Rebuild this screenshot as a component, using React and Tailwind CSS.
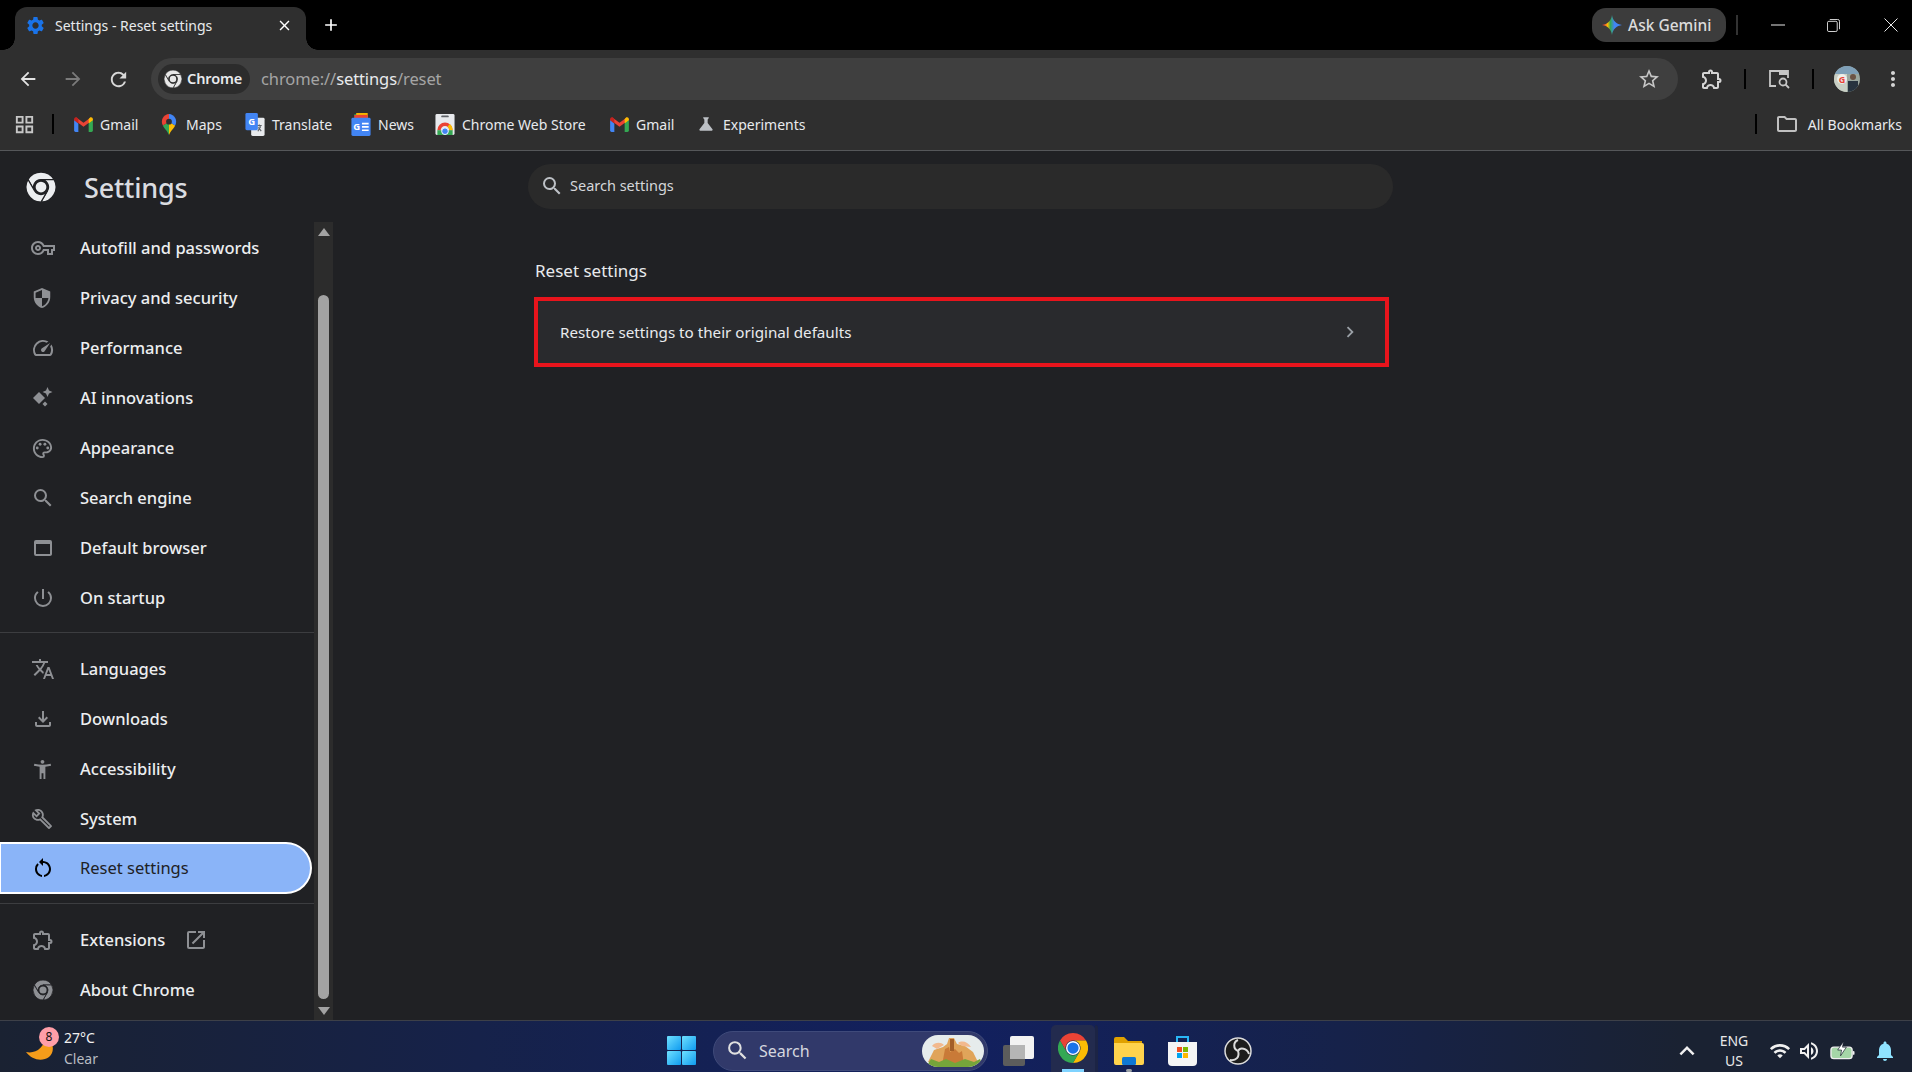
import {
  MdOutlineVpnKey, MdSecurity, MdOutlineSpeed, MdOutlinePalette, MdSearch, MdOutlineWebAsset,
  MdOutlinePowerSettingsNew, MdTranslate, MdOutlineFileDownload, MdAccessibilityNew, MdOutlineBuild,
  MdRestartAlt, MdOutlineExtension, MdOutlineOpenInNew, MdArrowBack, MdArrowForward, MdRefresh, MdClose,
  MdAdd, MdSettings, MdOutlineStarBorder, MdMoreVert, MdOutlineFolder, MdGridView, MdChevronRight,
  MdKeyboardArrowUp, MdWifi, MdOutlineVolumeUp, MdNotifications, MdScience,
} from 'react-icons/md';

function ChromeColor({ className }) {
  return (
    <svg viewBox="0 0 24 24" className={className}>
      <path fill="#ea4335" d="M12 0A12 12 0 0 0 1.6 6L6.8 15A6 6 0 0 1 12 6H22.4A12 12 0 0 0 12 0Z" />
      <path fill="#fbbc04" d="M22.4 6H12A6 6 0 0 1 17.2 15L12 24A12 12 0 0 0 22.4 6Z" />
      <path fill="#34a853" d="M1.6 6A12 12 0 0 0 12 24L17.2 15A6 6 0 0 1 6.8 15Z" />
      <circle cx="12" cy="12" r="5.6" fill="#fff" />
      <circle cx="12" cy="12" r="4.5" fill="#1a73e8" />
    </svg>
  );
}

// single colour chrome mark, gaps are drawn in the colour of whatever sits behind it
function ChromeMono({ className, gap }) {
  return (
    <svg viewBox="0 0 24 24" className={className} fill="currentColor" stroke={gap} strokeWidth="1">
      <path d="M12 0A12 12 0 0 0 1.6 6L6.8 15A6 6 0 0 1 12 6H22.4A12 12 0 0 0 12 0Z" />
      <path d="M22.4 6H12A6 6 0 0 1 17.2 15L12 24A12 12 0 0 0 22.4 6Z" />
      <path d="M1.6 6A12 12 0 0 0 12 24L17.2 15A6 6 0 0 1 6.8 15Z" />
      <circle cx="12" cy="12" r="4.300" stroke="none" />
    </svg>
  );
}

function GmailIcon() {
  return (
    <svg viewBox="0 0 20 16" className="w-[19px] h-[15px]">
      <path fill="#4285f4" d="M0 3v11.5A1.5 1.5 0 0 0 1.5 16H4.5V7z" />
      <path fill="#34a853" d="M20 3v11.5a1.5 1.5 0 0 1-1.5 1.5h-3V7z" />
      <path fill="#ea4335" d="M0 3 10 10.5 20 3 18 .5 15.5 2 10 6 4.5 2 2 .5z" />
      <path fill="#fbbc04" d="M15.5 2v5L20 3.5V2.2C20 .6 18.2-.4 17 .6z" />
      <path fill="#c5221f" d="M4.5 2v5L0 3.5V2.2C0 .6 1.8-.4 3 .6z" />
    </svg>
  );
}

function MapsIcon() {
  return (
    <span className="w-[20px] flex justify-center">
      <svg viewBox="0 0 16 22" className="w-[16px] h-[21px]">
        <path fill="#34a853" d="M8 22C6 17 3 15.5 1.6 12L8 8z" />
        <path fill="#fbbc04" d="M8 22c2-5 5-6.500 6.400-10L8 8z" />
        <path fill="#ea4335" d="M1.600 12A8 8 0 0 1 8 0V8z" />
        <path fill="#4285f4" d="M14.400 12A8 8 0 0 0 8 0V8z" />
        <circle cx="8" cy="8" r="3" fill="#2f2f2f" />
      </svg>
    </span>
  );
}

function TranslateIcon() {
  return (
    <svg viewBox="0 0 20 24" className="w-[20px] h-[23px]">
      <rect x="6" y="5" width="14" height="19" rx="1.500" fill="#e8eaed" />
      <path d="M12 13h5M14.500 12v2M13 19l3-5M13.500 15l3 4" stroke="#5f6368" strokeWidth="1.200" fill="none" />
      <rect x="0" y="0" width="13" height="18" rx="1.500" fill="#4285f4" />
      <text x="6.500" y="12" fontSize="10" fontWeight="700" textAnchor="middle" fill="#fff">G</text>
    </svg>
  );
}

function NewsIcon() {
  return (
    <svg viewBox="0 0 20 24" className="w-[20px] h-[23px]">
      <path fill="#0f9d58" d="M3 1h11l2 5H3z" />
      <path fill="#f4b400" d="M5 0h12v6H5z" />
      <path fill="#ea4335" d="M3 2h14v5H3z" />
      <rect x="0" y="5" width="20" height="19" rx="1.500" fill="#4285f4" />
      <text x="5.500" y="18" fontSize="10" fontWeight="700" textAnchor="middle" fill="#fff">G</text>
      <path d="M11 11h7M11 14.500h7M11 18h7" stroke="#fff" strokeWidth="1.800" />
    </svg>
  );
}

function StoreIcon() {
  return (
    <svg viewBox="0 0 20 22" className="w-[20px] h-[21px]">
      <rect x="0" y="0" width="20" height="22" rx="1.500" fill="#e8eaed" />
      <rect x="6" y="1.500" width="8" height="2" rx="1" fill="#5f6368" />
      <path fill="#ea4335" d="M2 17a8 8 0 0 1 16 0h-3.500a4.500 4.500 0 0 0-9 0z" />
      <path fill="#fbbc04" d="M14.500 17a4.500 4.500 0 0 0-2-3.700L15 10.500a8 8 0 0 1 3 6.500z" />
      <rect x="2" y="17" width="16" height="5" fill="#34a853" />
      <circle cx="10" cy="18" r="3.500" fill="#4285f4" stroke="#fff" />
    </svg>
  );
}

function GeminiStar() {
  return (
    <svg viewBox="0 0 20 20" className="w-[20px] h-[20px]">
      <defs>
        <linearGradient id="gem" x1="0" y1="0.5" x2="1" y2="0.5">
          <stop offset="0.1" stopColor="#ea4335" />
          <stop offset="0.28" stopColor="#fbbc04" />
          <stop offset="0.42" stopColor="#34a853" />
          <stop offset="0.62" stopColor="#4285f4" />
          <stop offset="1" stopColor="#4285f4" />
        </linearGradient>
      </defs>
      <path fill="url(#gem)" d="M10 0C10.600 5.500 14.500 9.400 20 10 14.500 10.600 10.600 14.500 10 20 9.400 14.500 5.500 10.600 0 10 5.500 9.400 9.400 5.500 10 0Z" />
    </svg>
  );
}

function SideIcon() {
  return (
    <svg viewBox="0 0 22 20" className="w-[22px] h-[20px]" fill="none" stroke="#c7c7c7" strokeWidth="1.800">
      <path d="M8 17H2V2h18v7" />
      <path fill="#c7c7c7" stroke="none" d="M11 2h9v4h-9z" />
      <circle cx="15" cy="13" r="3.500" />
      <path d="m17.500 15.500 3.500 3.500" />
    </svg>
  );
}

function Avatar() {
  return (
    <svg viewBox="0 0 26 26" className="w-[26px] h-[26px]">
      <defs>
        <clipPath id="ava"><circle cx="13" cy="13" r="13" /></clipPath>
      </defs>
      <g clipPath="url(#ava)">
        <rect width="26" height="26" fill="#9aa79f" />
        <path fill="#7fa0b8" d="M0 0h26v8H0z" />
        <path fill="#c9cfc4" d="M0 8h13v18H0z" />
        <circle cx="19" cy="11" r="3" fill="#6b5446" />
        <path fill="#27333f" d="M14 15h10v11H14z" />
        <circle cx="8" cy="13" r="5" fill="#eceeea" />
      </g>
      <text x="8" y="16.500" fontSize="9" fontWeight="700" textAnchor="middle" fill="#ea4335">G</text>
    </svg>
  );
}

function AiIcon() {
  return (
    <svg viewBox="0 0 22 22" className="w-[22px] h-[22px]" fill="#8e9094">
      <path d="M8 5 14 11 8 17 2 11z" />
      <path d="M16.500 0 18 3.500 21.500 5 18 6.500 16.500 10 15 6.500 11.500 5 15 3.500z" />
      <path d="M14 14.500 16.500 17 14 19.500 11.500 17z" />
    </svg>
  );
}

function WindowsLogo() {
  return (
    <svg viewBox="0 0 29 29" className="w-[29px] h-[29px]">
      <defs>
        <linearGradient id="win" x1="0" y1="0" x2="1" y2="1">
          <stop offset="0" stopColor="#6fe0ff" />
          <stop offset="1" stopColor="#0f9bf0" />
        </linearGradient>
      </defs>
      <rect x="0" y="0" width="14" height="14" rx="1" fill="url(#win)" />
      <rect x="15" y="0" width="14" height="14" rx="1" fill="url(#win)" />
      <rect x="0" y="15" width="14" height="14" rx="1" fill="url(#win)" />
      <rect x="15" y="15" width="14" height="14" rx="1" fill="url(#win)" />
    </svg>
  );
}

function SearchThumb() {
  return (
    <svg viewBox="0 0 62 32" className="w-[62px] h-[32px]">
      <defs>
        <clipPath id="thumb"><rect width="62" height="32" rx="16" /></clipPath>
      </defs>
      <g clipPath="url(#thumb)">
        <rect width="62" height="32" fill="#e6ecec" />
        <path fill="#e0a45a" d="M6 27 12 15l9-3 4-3 2-6 5 0 3 6 8 2 8 6 5 10z" />
        <path fill="#c97a38" d="M20 30l3-16 4-2 1 5 5-3 4 4 3-2 2 14z" />
        <path fill="#f2b98e" d="M10 11c3-4 9-4 12-1l-7 4zM36 8c4-3 10-1 13 4l-9-1z" />
        <path fill="#a35f28" d="M28 4h4v12h-4z" />
        <path fill="#76a53a" d="M4 32l5-8 8 3 7-3 9 4 10-4 9 3 6-3 4 8z" />
      </g>
    </svg>
  );
}

function TaskViewIcon() {
  return (
    <svg viewBox="0 0 31 30" className="w-[31px] h-[30px]">
      <rect x="0" y="9" width="22" height="21" rx="2" fill="#5c5c5c" />
      <rect x="7" y="0" width="24" height="23" rx="2" fill="#f2f2f2" />
      <rect x="7" y="9" width="15" height="14" fill="#b5b5b5" />
    </svg>
  );
}

function ExplorerIcon() {
  return (
    <svg viewBox="0 0 30 28" className="w-[30px] h-[28px]">
      <path fill="#e0a100" d="M0 2a2 2 0 0 1 2-2h8l4 4h14v6H0z" />
      <path fill="#ffd34d" d="M0 6h28a2 2 0 0 1 2 2v18a2 2 0 0 1-2 2H2a2 2 0 0 1-2-2z" />
      <rect x="8" y="20" width="14" height="8" rx="1.500" fill="#0f78d4" />
    </svg>
  );
}

function StoreTaskIcon() {
  return (
    <svg viewBox="0 0 29 30" className="w-[29px] h-[30px]">
      <path d="M9 6V1h11v5" fill="none" stroke="#29b6f6" strokeWidth="2" />
      <path fill="#f5f5f5" d="M0 6h29v20a4 4 0 0 1-4 4H4a4 4 0 0 1-4-4z" />
      <rect x="9" y="11" width="5" height="5" fill="#f25022" />
      <rect x="15" y="11" width="5" height="5" fill="#7fba00" />
      <rect x="9" y="17" width="5" height="5" fill="#00a4ef" />
      <rect x="15" y="17" width="5" height="5" fill="#ffb900" />
    </svg>
  );
}

function ObsIcon() {
  return (
    <svg viewBox="0 0 28 28" className="w-[28px] h-[28px]" fill="none">
      <circle cx="14" cy="14" r="13" fill="#1c1c1c" stroke="#dcdcdc" strokeWidth="1.500" />
      <path d="M14 3c-5 2-5 9 0 11M25 17c-2-6-9-7-11-3M6 23c6 1 10-3 8-9" stroke="#dcdcdc" strokeWidth="2" />
    </svg>
  );
}

function BatteryIcon() {
  return (
    <svg viewBox="0 0 26 20" className="w-[25px] h-[20px]">
      <rect x="1" y="6" width="22" height="12" rx="3" fill="#a5d6a7" stroke="#f0f0f0" strokeWidth="1.400" />
      <rect x="23.500" y="10" width="2" height="4" rx="1" fill="#f0f0f0" />
      <path fill="#fff" stroke="#111827" strokeWidth="0.700" d="M14 0 8 9h4l-1 6 6-9h-4z" />
    </svg>
  );
}

const navTop = [
  ['Autofill and passwords', <MdOutlineVpnKey className="w-[24px] h-[24px]" />],
  ['Privacy and security', <MdSecurity className="w-[22px] h-[22px]" />],
  ['Performance', <MdOutlineSpeed className="w-[24px] h-[24px]" />],
  ['AI innovations', <AiIcon />],
  ['Appearance', <MdOutlinePalette className="w-[23px] h-[23px]" />],
  ['Search engine', <MdSearch className="w-[24px] h-[24px]" />],
  ['Default browser', <MdOutlineWebAsset className="w-[24px] h-[24px]" />],
  ['On startup', <MdOutlinePowerSettingsNew className="w-[24px] h-[24px]" />],
];

const navMid = [
  ['Languages', <MdTranslate className="w-[24px] h-[24px]" />],
  ['Downloads', <MdOutlineFileDownload className="w-[24px] h-[24px]" />],
  ['Accessibility', <MdAccessibilityNew className="w-[23px] h-[23px]" />],
  ['System', <MdOutlineBuild className="w-[22px] h-[22px]" />],
];

const bookmarks = [
  ['Gmail', <GmailIcon />, 'w-[85px]'],
  ['Maps', <MapsIcon />, 'w-[86px]'],
  ['Translate', <TranslateIcon />, 'w-[106px]'],
  ['News', <NewsIcon />, 'w-[84px]'],
  ['Chrome Web Store', <StoreIcon />, 'w-[175px]'],
  ['Gmail', <GmailIcon />, 'w-[86px]'],
  ['Experiments', <MdScience className="w-[20px] h-[20px] text-[#bdc1c6]" />, 'w-[110px]'],
];

function NavRow({ label, icon, extra }) {
  return (
    <div className="h-[50px] flex items-center">
      <span className="w-[80px] pl-[31px] flex items-center text-[#8e9094]">{icon}</span>
      <span className="text-[16.5px] font-medium text-[#eceef0]">{label}</span>
      {extra}
    </div>
  );
}

export default function App() {
  return (
    <div className="w-[1912px] h-[1072px] overflow-hidden flex flex-col bg-[#202124] font-['Noto_Sans','Open_Sans',sans-serif] text-[#e8eaed]">
      {/* title bar */}
      <div className="h-[50px] bg-black flex items-end shrink-0">
        <span className="w-[3px]" />
        <span className="w-[12px] h-[12px] bg-[radial-gradient(circle_at_0_0,#000_11.500px,#2f2f2f_12px)]" />
        <div className="w-[291px] h-[43px] bg-[#2f2f2f] rounded-t-[12px] flex items-center pb-[7px] relative">
          <MdSettings className="w-[21px] h-[21px] text-[#1a73e8] ml-[10px]" />
          <span className="ml-[9px] w-[220px] text-[14px] text-[#e8eaed]">Settings - Reset settings</span>
          <MdClose className="w-[17px] h-[17px] text-white ml-[1px]" />
        </div>
        <span className="w-[12px] h-[12px] bg-[radial-gradient(circle_at_100%_0,#000_11.500px,#2f2f2f_12px)]" />
        <div className="h-[50px] flex items-center ml-[3px]">
          <MdAdd className="w-[20px] h-[20px] text-white" />
        </div>
        <div className="flex-1" />
        <div className="h-[50px] flex items-center">
          <div className="w-[134px] h-[34px] rounded-[14px] bg-[#3c3c3c] flex items-center pl-[10px]">
            <GeminiStar />
            <span className="ml-[6px] text-[15.5px] font-medium text-[#dcdcdc] mt-[1px]">Ask Gemini</span>
          </div>
          <span className="w-[2px] h-[20px] bg-[#333] ml-[10px]" />
          <svg viewBox="0 0 14 14" className="w-[14px] h-[14px] ml-[33px]" stroke="#e8e8e8" fill="none"><path d="M0 7h14" /></svg>
          <svg viewBox="0 0 14 14" className="w-[13px] h-[13px] ml-[42px]" stroke="#e8e8e8" fill="none"><rect x="0.500" y="2.500" width="10.500" height="11" rx="1.500" /><path d="M3 .5h8.500a2 2 0 0 1 2 2V11" /></svg>
          <svg viewBox="0 0 14 14" className="w-[14px] h-[14px] ml-[44px]" stroke="#e8e8e8" fill="none"><path d="m.5.500 13 13M13.500.500l-13 13" /></svg>
        </div>
        <span className="w-[14px]" />
      </div>

      {/* toolbar */}
      <div className="h-[50px] bg-[#2f2f2f] flex items-start shrink-0 pt-[8px]">
        <div className="w-[151px] h-[42px] flex items-center text-[#e3e3e3]">
          <MdArrowBack className="w-[22px] h-[22px] ml-[17px]" />
          <MdArrowForward className="w-[22px] h-[22px] ml-[23px] text-[#7b7b7b]" />
          <MdRefresh className="w-[23px] h-[23px] ml-[23px] text-[#d8d8d8]" />
        </div>
        <div className="w-[1527px] h-[42px] rounded-full bg-[#3f3f3f] flex items-center pl-[7px] pr-[17px]">
          <div className="w-[92px] h-[30px] rounded-full bg-[#2c2c2c] flex items-center pl-[6px] mr-[11px]">
            <ChromeMono className="w-[18px] h-[18px] text-[#e8e8e8]" gap="#2c2c2c" />
            <span className="ml-[5px] text-[14.5px] font-semibold text-[#e8eaed] tracking-[-0.1px]">Chrome</span>
          </div>
          <span className="text-[16.5px] text-[#a5a5a5] tracking-[-0.1px] flex-1">chrome://<span className="text-[#e8eaed]">settings</span>/reset</span>
          <MdOutlineStarBorder className="w-[24px] h-[24px] text-[#c7c7c7]" />
        </div>
        <div className="flex-1 h-[42px] flex items-center text-[#c7c7c7]">
          <MdOutlineExtension className="w-[24px] h-[24px] ml-[22px] text-[#d4d4d4]" />
          <span className="w-[2px] h-[20px] bg-black ml-[20px]" />
          <span className="ml-[22px]"><SideIcon /></span>
          <span className="w-[2px] h-[20px] bg-black ml-[22px]" />
          <div className="ml-[20px]"><Avatar /></div>
          <MdMoreVert className="w-[24px] h-[24px] ml-[21px] text-[#d4d4d4]" />
        </div>
      </div>

      {/* bookmarks */}
      <div className="h-[50px] bg-[#2f2f2f] flex items-center shrink-0 text-[14px] text-[#e8eaed] pb-[2px]">
        <MdGridView className="w-[23px] h-[23px] ml-[13px] text-[#c7c7c7]" />
        <span className="w-[2px] h-[20px] bg-black ml-[16px] mr-[20px]" />
        {bookmarks.map(([label, icon, width], i) => (
          <div key={i} className={`${width} flex items-center gap-[7px] shrink-0`}>
            {icon}
            <span>{label}</span>
          </div>
        ))}
        <div className="flex-1" />
        <span className="w-[2px] h-[20px] bg-black mr-[18px]" />
        <MdOutlineFolder className="w-[24px] h-[24px] text-[#c0c0c0]" />
        <span className="ml-[9px] mr-[10px]">All Bookmarks</span>
      </div>

      {/* settings page */}
      <div className="flex-1 min-h-0 flex border-t-[1px] border-[#55575a]">
        <div className="w-[333px] shrink-0 flex flex-col">
          <div className="h-[71px] flex items-center shrink-0">
            <ChromeMono className="w-[30px] h-[30px] text-[#eceef0] ml-[26px]" gap="#202124" />
            <span className="ml-[28px] mt-[2px] text-[27px] leading-none text-[#dadce0] tracking-[-0.2px] font-medium">Settings</span>
          </div>
          <div className="flex-1 min-h-0 flex">
            <div className="w-[314px] pt-[1px]">
              {navTop.map(([label, icon]) => <NavRow key={label} label={label} icon={icon} />)}
              <div className="h-[1px] bg-[#3c3d40] mt-[9px] mb-[11px]" />
              {navMid.map(([label, icon]) => <NavRow key={label} label={label} icon={icon} />)}
              <div className="w-[312px] h-[52px] -mt-[2px] flex items-center bg-[#8ab4f8] border-2 border-l-[1px] border-white rounded-r-full rounded-l-[4px]">
                <span className="w-[79px] pl-[30px] flex items-center"><MdRestartAlt className="w-[24px] h-[24px] text-black" /></span>
                <span className="text-[16.5px] text-[#202124]">Reset settings</span>
              </div>
              <div className="h-[1px] bg-[#3c3d40] mt-[9px] mb-[11px]" />
              <NavRow
                label="Extensions"
                icon={<MdOutlineExtension className="w-[24px] h-[24px]" />}
                extra={<MdOutlineOpenInNew className="w-[24px] h-[24px] ml-[19px] text-[#8e9094]" />}
              />
              <NavRow label="About Chrome" icon={<ChromeMono className="w-[20px] h-[20px] mx-[2px]" gap="#202124" />} />
            </div>
            <div className="w-[19px] bg-[#2c2c2c] flex flex-col items-center pt-[6px] pb-[5px]">
              <span className="w-0 h-0 border-x-[6px] border-x-transparent border-b-[8px] border-b-[#a3a3a3]" />
              <div className="h-[59px]" />
              <div className="w-[11px] flex-1 rounded-full bg-[#a3a3a3]" />
              <div className="h-[8px]" />
              <span className="w-0 h-0 border-x-[6px] border-x-transparent border-t-[8px] border-t-[#a3a3a3]" />
            </div>
          </div>
        </div>

        <div className="flex-1 pl-[195px] pt-[13px]">
          <div className="w-[865px] h-[45px] rounded-full bg-[#2a2a2a] flex items-center pl-[12px] pb-[1px]">
            <MdSearch className="w-[24px] h-[24px] text-[#bdc1c6]" />
            <span className="ml-[6px] text-[14.5px] text-[#d5d7da]">Search settings</span>
          </div>
          <div className="ml-[7px] mt-[50px] text-[17px] leading-[24px] text-[#e8eaed]">Reset settings</div>
          <div className="ml-[6px] mt-[14px] w-[855px] h-[70px] border-[4px] border-[#e8141c] bg-[#292a2d] flex items-center pl-[22px] pr-[24px]">
            <span className="flex-1 text-[15.2px] text-[#e8eaed] mt-[1px]">Restore settings to their original defaults</span>
            <MdChevronRight className="w-[22px] h-[22px] text-[#9aa0a6]" />
          </div>
        </div>
      </div>

      {/* taskbar */}
      <div className="h-[52px] shrink-0 border-t-[1px] border-[#3d4048] bg-[linear-gradient(90deg,#1a2232_0%,#16224a_25%,#12205f_50%,#16224a_70%,#1a2232_88%,#1a2232_100%)] flex items-center relative pt-[8px]">
        <div className="w-[64px] h-[51px] self-start -mt-[8px] pl-[26px] pt-[4px] relative">
          <svg viewBox="0 0 28 24" className="w-[28px] h-[24px] mt-[11px]">
            <path fill="#f59c1a" d="M0 16c10 2 18-4 20-16 8 6 9 16 3 21-7 5-17 3-23-5Z" />
          </svg>
          <span className="absolute left-[39px] top-[6px] w-[20px] h-[20px] rounded-full bg-[#ff9ea8] text-[#111] text-[12px] flex items-center justify-center">8</span>
        </div>
        <div className="w-[603px] leading-[21px] text-[14px] -mt-[5px]">
          <div className="text-[#f0f0f0]">27°C</div>
          <div className="text-[#b8bcc2]">Clear</div>
        </div>
        <WindowsLogo />
        <div className="ml-[17px] w-[275px] h-[40px] rounded-full bg-[#31396a] border-[1px] border-[#3f4a7a] flex items-center pl-[11px]">
          <MdSearch className="w-[25px] h-[25px] text-[#e0e0e0]" />
          <span className="ml-[9px] w-[163px] text-[16px] text-[#d5d7df]">Search</span>
          <SearchThumb />
        </div>
        <div className="ml-[15px]"><TaskViewIcon /></div>
        <div className="ml-[17px] w-[44px] h-[47px] self-end rounded-t-[5px] bg-[#232b4e] flex flex-col items-center pt-[8px] justify-between">
          <ChromeColor className="w-[30px] h-[30px]" />
          <span className="w-[22px] h-[3px] bg-[#7fd3ff]" />
        </div>
        <span className="w-[3px] h-[47px] self-end rounded-tr-[4px] bg-[#1c2445]" />
        <div className="ml-[16px] relative">
          <ExplorerIcon />
          <span className="absolute left-[12px] -bottom-[7px] w-[6px] h-[3px] rounded-full bg-[#9aa0a6]" />
        </div>
        <div className="ml-[24px]"><StoreTaskIcon /></div>
        <div className="ml-[27px]"><ObsIcon /></div>
        <div className="flex-1" />
        <MdKeyboardArrowUp className="w-[30px] h-[30px] text-[#f0f0f0]" />
        <div className="ml-[12px] w-[40px] text-center text-[14px] leading-[20px] text-[#e8e8e8] mt-[1px]">
          <div>ENG</div>
          <div>US</div>
        </div>
        <MdWifi className="ml-[15px] w-[22px] h-[22px] text-[#f0f0f0]" />
        <MdOutlineVolumeUp className="ml-[6px] w-[24px] h-[24px] text-[#f0f0f0]" />
        <span className="ml-[9px]"><BatteryIcon /></span>
        <MdNotifications className="ml-[18px] w-[24px] h-[24px] text-[#8fe3ff] mr-[15px]" />
      </div>
    </div>
  );
}
